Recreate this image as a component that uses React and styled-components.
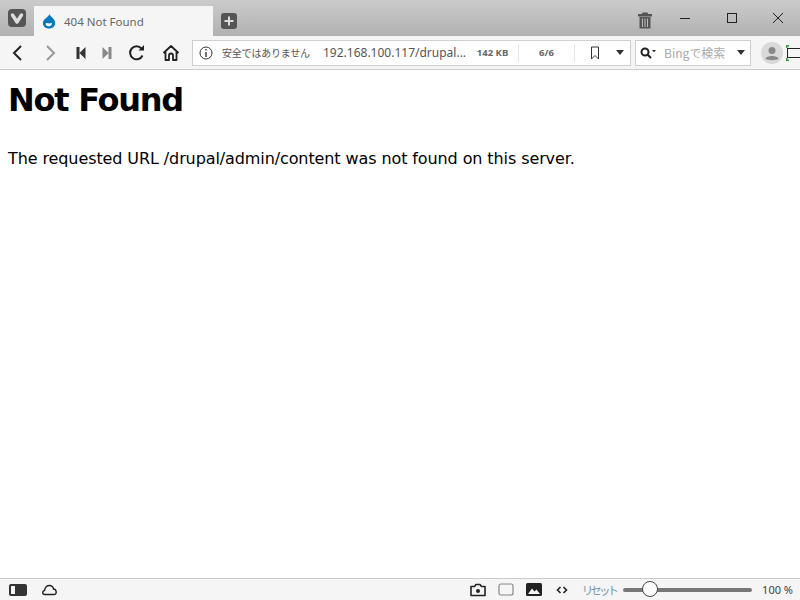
import styled, { createGlobalStyle } from "styled-components";

const GlobalStyle = createGlobalStyle`
  html, body {
    margin: 0;
    padding: 0;
    background: #ffffff;
  }
`;

const uiFont = `"Noto Sans", "Noto Sans CJK JP", sans-serif`;

const App = () => {
  return (
    <Wrapper>
      <GlobalStyle />
      <TitleBar>
        <VivaldiButton>
          <svg width="18" height="18" viewBox="0 0 18 18">
            <rect width="18" height="18" rx="4" fill="#555" />
            <path d="M4.5 6 L9 13 L13.5 6" fill="none" stroke="#ddd" strokeWidth="3.4" strokeLinecap="round" strokeLinejoin="round" />
          </svg>
        </VivaldiButton>
        <Tab>
          <svg width="14" height="16" viewBox="0 0 16 18">
            <path d="M8.5 1 C9 4 15 6 15 11.5 C15 15 12 17.5 8 17.5 C4 17.5 1 15 1 11.5 C1 6.5 7.5 5 8.5 1 Z" fill="#0678be" />
            <path d="M4 12 C6 10 8 13 11 11 C12 13 10 15 8 15 C6 15 4.5 14 4 12 Z" fill="#fff" />
          </svg>
          <TabTitle>404 Not Found</TabTitle>
        </Tab>
        <NewTab>
          <svg width="16" height="16" viewBox="0 0 16 16">
            <rect width="16" height="16" rx="3" fill="#555" />
            <path d="M8 3.5 V12.5 M3.5 8 H12.5" stroke="#ddd" strokeWidth="2" />
          </svg>
        </NewTab>
        <Spacer />
        <TrashButton>
          <svg width="14" height="17" viewBox="0 0 14 17">
            <path d="M0 2.5 H14 V4 H0 Z M4.5 2.5 V1 H9.5 V2.5" fill="#555" stroke="#555" strokeWidth="1" />
            <path d="M1.5 5 H12.5 V16.5 H1.5 Z" fill="#555" />
            <path d="M4.5 6.5 V15 M7 6.5 V15 M9.5 6.5 V15" stroke="#bbb" strokeWidth="1" />
          </svg>
        </TrashButton>
        <WindowButton $width={47}>
          <svg width="12" height="12" viewBox="0 0 12 12">
            <path d="M1 6.5 H11" stroke="#222" strokeWidth="1" />
          </svg>
        </WindowButton>
        <WindowButton $width={47}>
          <svg width="12" height="12" viewBox="0 0 12 12">
            <rect x="1.5" y="1.5" width="9" height="9" fill="none" stroke="#222" strokeWidth="1" />
          </svg>
        </WindowButton>
        <WindowButton $width={45}>
          <svg width="12" height="12" viewBox="0 0 12 12">
            <path d="M1 1 L11 11 M11 1 L1 11" stroke="#222" strokeWidth="1" />
          </svg>
        </WindowButton>
      </TitleBar>

      <ToolBar>
        <NavIcons>
          <NavSlot $width={34}>
            <svg width="14" height="18" viewBox="0 0 14 18">
              <path d="M11 2 L4 9 L11 16" fill="none" stroke="#222" strokeWidth="2" />
            </svg>
          </NavSlot>
          <NavSlot $width={34}>
            <svg width="14" height="18" viewBox="0 0 14 18">
              <path d="M3 2 L10 9 L3 16" fill="none" stroke="#999" strokeWidth="2" />
            </svg>
          </NavSlot>
          <NavSlot $width={26}>
            <svg width="12" height="14" viewBox="0 0 12 14">
              <path d="M1.5 1 H4.5 V13 H1.5 Z M10.5 1 V13 L4.5 7 Z" fill="#333" />
            </svg>
          </NavSlot>
          <NavSlot $width={26}>
            <svg width="12" height="14" viewBox="0 0 12 14">
              <path d="M7.5 1 H10.5 V13 H7.5 Z M1.5 1 V13 L7.5 7 Z" fill="#888" />
            </svg>
          </NavSlot>
          <NavSlot $width={34}>
            <svg width="18" height="18" viewBox="0 0 18 18">
              <path d="M14.5 11.5 A6.5 6.5 0 1 1 13.5 4.5" fill="none" stroke="#222" strokeWidth="2" />
              <path d="M10.5 6.5 H16 V1 Z" fill="#222" />
            </svg>
          </NavSlot>
          <NavSlot $width={34}>
            <svg width="18" height="18" viewBox="0 0 18 18">
              <path d="M1.5 9 L9 2 L16.5 9 M3.5 8 V16 H7 V11.5 A2 2 0 0 1 11 11.5 V16 H14.5 V8" fill="none" stroke="#222" strokeWidth="1.8" strokeLinejoin="round" />
            </svg>
          </NavSlot>
        </NavIcons>
        <AddressBar>
          <svg width="14" height="14" viewBox="0 0 14 14">
            <circle cx="7" cy="7" r="6" fill="none" stroke="#333" strokeWidth="1" />
            <path d="M7 6 V11 M7 3 V4.6" stroke="#333" strokeWidth="1.4" />
          </svg>
          <SecurityText>安全ではありません</SecurityText>
          <UrlText>192.168.100.117/drupal...</UrlText>
          <PageStat $width={51}>142 KB</PageStat>
          <StatDivider />
          <PageStat $width={55}>6/6</PageStat>
          <StatDivider />
          <BookmarkIcon>
            <svg width="10" height="14" viewBox="0 0 10 14">
              <path d="M1.5 1 H8.5 V13 L5 9.5 L1.5 13 Z" fill="none" stroke="#333" strokeWidth="1" />
            </svg>
          </BookmarkIcon>
          <Caret $color="#333" />
        </AddressBar>
        <SearchBar>
          <svg width="16" height="12" viewBox="0 0 16 12">
            <circle cx="5" cy="5" r="3.5" fill="none" stroke="#222" strokeWidth="2" />
            <path d="M7.5 7.5 L11 11" stroke="#222" strokeWidth="2.2" />
            <path d="M12 3 H16 L14 5.2 Z" fill="#222" />
          </svg>
          <SearchText>Bingで検索</SearchText>
          <Caret $color="#333" />
        </SearchBar>
        <Avatar>
          <svg width="22" height="22" viewBox="0 0 22 22">
            <circle cx="11" cy="11" r="11" fill="#d9d9d9" />
            <circle cx="11" cy="8.5" r="3.5" fill="#888" />
            <path d="M4.5 17 C4.5 13 17.5 13 17.5 17 C15 18.5 7 18.5 4.5 17 Z" fill="#888" />
          </svg>
        </Avatar>
        <CaptureIcon>
          <svg width="16" height="16" viewBox="0 0 16 16">
            <rect x="1.5" y="3.5" width="14" height="9" fill="none" stroke="#222" strokeWidth="1" />
            <path d="M0 0 H3 V1.5 H1.5 V3 H0 Z M0 13 H1.5 V14.5 H3 V16 H0 Z" fill="#3a9a4a" />
          </svg>
        </CaptureIcon>
      </ToolBar>

      <Page>
        <Heading>Not Found</Heading>
        <Message>The requested URL /drupal/admin/content was not found on this server.</Message>
      </Page>

      <StatusBar>
        <svg width="18" height="12" viewBox="0 0 18 12">
          <rect width="18" height="12" rx="2" fill="#333" />
          <rect x="2" y="2" width="4" height="8" fill="#f5f5f5" />
        </svg>
        <svg width="17" height="12" viewBox="0 0 17 12">
          <path d="M4 10.5 C1 10.5 1 7 3.5 6.5 C4 3.5 6 1.5 8.5 1.5 C11 1.5 12.5 3.5 12.5 5 C15.5 5 16.5 10.5 13 10.5 Z" fill="none" stroke="#222" strokeWidth="1.4" />
        </svg>
        <Spacer />
        <StatusTools>
          <svg width="16" height="14" viewBox="0 0 16 14">
            <path d="M1 3.5 H4.5 L6 1.5 H10 L11.5 3.5 H15 V12.5 H1 Z" fill="none" stroke="#222" strokeWidth="1.6" strokeLinejoin="round" />
            <circle cx="8" cy="8" r="2" fill="#222" />
          </svg>
          <svg width="16" height="13" viewBox="0 0 16 13">
            <rect x="1" y="1" width="14" height="11" rx="2" fill="none" stroke="#888" strokeWidth="1.2" />
          </svg>
          <svg width="16" height="13" viewBox="0 0 16 13">
            <rect width="16" height="13" rx="1.5" fill="#222" />
            <path d="M2 11 L6 5.5 L8.5 8.5 L10.5 6.5 L14 11 Z" fill="#f5f5f5" />
          </svg>
          <CodeIcon>
            <svg width="12" height="8" viewBox="0 0 12 8">
              <path d="M4.5 1 L1.5 4 L4.5 7 M7.5 1 L10.5 4 L7.5 7" fill="none" stroke="#222" strokeWidth="1.6" />
            </svg>
          </CodeIcon>
        </StatusTools>
        <ResetLabel>リセット</ResetLabel>
        <ZoomTrack>
          <ZoomKnob />
        </ZoomTrack>
        <ZoomValue>100 %</ZoomValue>
      </StatusBar>
    </Wrapper>
  );
};

const Wrapper = styled.div`
  display: flex;
  flex-direction: column;
  width: 800px;
  height: 600px;
  overflow: hidden;
  background: #ffffff;
`;

const TitleBar = styled.div`
  display: flex;
  align-items: flex-end;
  height: 36px;
  flex: none;
  background: linear-gradient(#cbcbcb, #b1b1b1);
`;

const VivaldiButton = styled.div`
  display: flex;
  width: 18px;
  margin: 0 8px 9px 8px;
`;

const Tab = styled.div`
  display: flex;
  align-items: center;
  gap: 8px;
  box-sizing: border-box;
  width: 179px;
  height: 30px;
  padding-left: 8px;
  background: #f5f5f5;
`;

const TabTitle = styled.span`
  font-family: ${uiFont};
  font-size: 11.5px;
  color: #666666;
`;

const NewTab = styled.div`
  display: flex;
  margin: 0 0 7px 8px;
`;

const Spacer = styled.div`
  flex: 1;
`;

const TrashButton = styled.div`
  display: flex;
  margin-bottom: 7px;
  margin-right: 9px;
`;

const WindowButton = styled.div`
  display: flex;
  justify-content: center;
  align-items: center;
  width: ${(props) => props.$width}px;
  height: 36px;
`;

const ToolBar = styled.div`
  display: flex;
  align-items: center;
  box-sizing: border-box;
  height: 34px;
  flex: none;
  background: #f5f5f5;
  border-bottom: 1px solid #cccccc;
`;

const NavIcons = styled.div`
  display: flex;
  align-items: center;
  flex: none;
  width: 192px;
`;

const NavSlot = styled.div`
  display: flex;
  justify-content: center;
  width: ${(props) => props.$width}px;
`;

const AddressBar = styled.div`
  display: flex;
  align-items: center;
  flex: none;
  box-sizing: border-box;
  width: 439px;
  height: 26px;
  padding-left: 6px;
  background: #ffffff;
  border: 1px solid #cfcfcf;
`;

const SecurityText = styled.span`
  margin-left: 9px;
  width: 101px;
  font-family: "Noto Sans CJK JP", sans-serif;
  font-size: 10px;
  letter-spacing: -0.2px;
  color: #555555;
  white-space: nowrap;
`;

const UrlText = styled.span`
  width: 144px;
  font-family: ${uiFont};
  font-size: 12px;
  color: #555555;
  white-space: nowrap;
`;

const PageStat = styled.span`
  width: ${(props) => props.$width}px;
  font-family: ${uiFont};
  font-size: 9.5px;
  font-weight: 700;
  text-align: center;
  color: #666666;
`;

const StatDivider = styled.div`
  width: 1px;
  height: 18px;
  background: #e4e4e4;
`;

const BookmarkIcon = styled.div`
  display: flex;
  margin-left: 15px;
  margin-right: 16px;
`;

const CodeIcon = styled.div`
  display: flex;
  margin-left: 2px;
`;

const Caret = styled.div`
  width: 0;
  height: 0;
  border-left: 4px solid transparent;
  border-right: 4px solid transparent;
  border-top: 5px solid ${(props) => props.$color};
`;

const SearchBar = styled.div`
  display: flex;
  align-items: center;
  flex: none;
  box-sizing: border-box;
  width: 116px;
  height: 26px;
  margin-left: 4px;
  padding: 0 5px 0 4px;
  background: #ffffff;
  border: 1px solid #cfcfcf;
`;

const SearchText = styled.span`
  flex: 1;
  margin-left: 8px;
  font-family: "Noto Sans CJK JP", sans-serif;
  font-size: 12px;
  color: #aaaaaa;
  white-space: nowrap;
`;

const Avatar = styled.div`
  display: flex;
  flex: none;
  margin-left: 10px;
`;

const CaptureIcon = styled.div`
  display: flex;
  flex: none;
  margin-left: 3px;
`;

const Page = styled.main`
  flex: 1;
  padding: 8px;
  color: #000000;
`;

const Heading = styled.h1`
  margin: 0;
  padding-top: 3px;
  font-family: "DejaVu Sans", sans-serif;
  font-size: 32px;
  line-height: 38px;
  font-weight: 700;
  letter-spacing: -1.25px;
`;

const Message = styled.p`
  margin: 29px 0 0;
  font-family: "DejaVu Sans", sans-serif;
  font-size: 16px;
  line-height: 22px;
  letter-spacing: -0.1px;
`;

const StatusBar = styled.div`
  display: flex;
  align-items: center;
  gap: 14px;
  box-sizing: border-box;
  height: 22px;
  flex: none;
  padding: 0 7px 0 9px;
  background: #f5f5f5;
  border-top: 1px solid #cccccc;
`;

const StatusTools = styled.div`
  display: flex;
  align-items: center;
  gap: 12px;
`;

const ResetLabel = styled.span`
  font-family: "Noto Sans CJK JP", sans-serif;
  font-size: 11.5px;
  letter-spacing: -2.9px;
  color: #7a95a5;
`;

const ZoomTrack = styled.div`
  position: relative;
  width: 129px;
  height: 4px;
  margin-left: -7px;
  border-radius: 2px;
  background: #777777;
`;

const ZoomKnob = styled.div`
  position: absolute;
  top: -7px;
  left: 19px;
  box-sizing: border-box;
  width: 16px;
  height: 16px;
  border-radius: 50%;
  background: #ffffff;
  border: 1px solid #444444;
`;

const ZoomValue = styled.span`
  margin-left: -4px;
  font-family: ${uiFont};
  font-size: 11px;
  color: #444444;
`;

export default App;
